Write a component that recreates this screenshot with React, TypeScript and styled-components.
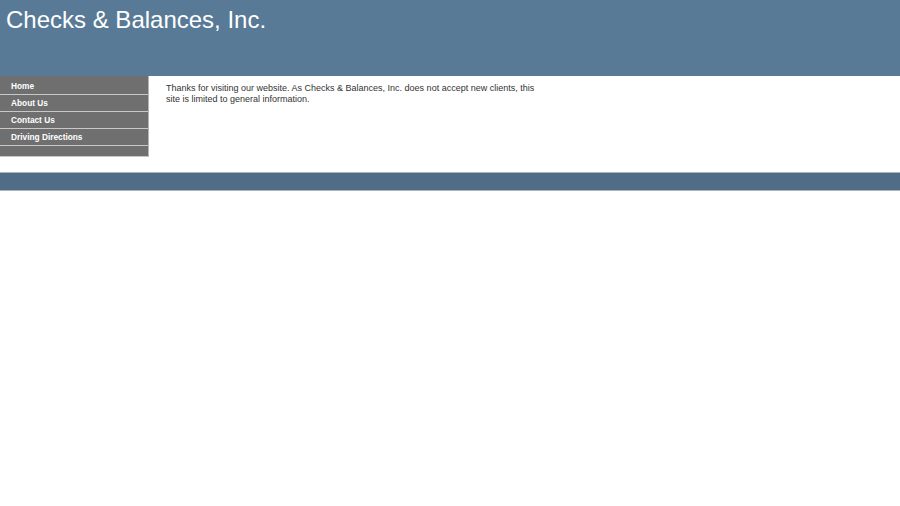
import styled, { createGlobalStyle } from "styled-components";

const GlobalStyle = createGlobalStyle`
  body {
    margin: 0;
    background: #fff;
    font-family: "Liberation Sans", Arial, sans-serif;
  }
`;

const menu = ["Home", "About Us", "Contact Us", "Driving Directions"];

export default function App() {
  return (
    <>
      <GlobalStyle />
      <Header>
        <Title>Checks &amp; Balances, Inc.</Title>
      </Header>
      <Main>
        <Sidebar>
          {menu.map(item => (
            <MenuItem key={item} href="#">
              {item}
            </MenuItem>
          ))}
          <MenuFiller />
        </Sidebar>
        <Content>
          <p>
            Thanks for visiting our website. As Checks &amp; Balances, Inc. does not accept new clients, this
            site is limited to general information.
          </p>
        </Content>
      </Main>
      <Footer />
    </>
  );
}

const Header = styled.div`
  height: 76px;
  background-color: #587a96;
  padding: 6px 6px 0;
  box-sizing: border-box;
`;

const Title = styled.h1`
  margin: 0;
  font-size: 24px;
  font-weight: normal;
  line-height: 28px;
  color: #fff;
`;

const Main = styled.div`
  display: flex;
  height: 96px;
`;

const Sidebar = styled.div`
  display: flex;
  flex-direction: column;
  width: 148px;
  align-self: flex-start;
  padding-top: 2px;
  background-color: #6f6f6f;
  border-right: 1px solid #b4b4b4;
`;

const MenuItem = styled.a`
  display: block;
  height: 16px;
  line-height: 17px;
  padding-left: 11px;
  background-color: #6f6f6f;
  border-bottom: 1px solid #c8c8c8;
  color: #fff;
  font-size: 8.3px;
  font-weight: bold;
  text-decoration: none;
`;

const MenuFiller = styled.div`
  height: 10px;
  background-color: #6f6f6f;
  border-bottom: 1px solid #c8c8c8;
`;

const Content = styled.div`
  padding: 7px 0 0 17px;
  width: 380px;

  p {
    margin: 0;
    font-size: 9px;
    line-height: 11px;
    color: #333;
  }
`;

const Footer = styled.div`
  height: 17px;
  background-color: #4f6d85;
  border-top: 1px solid #a9b6c2;
  border-bottom: 1px solid #a9b6c2;
`;
